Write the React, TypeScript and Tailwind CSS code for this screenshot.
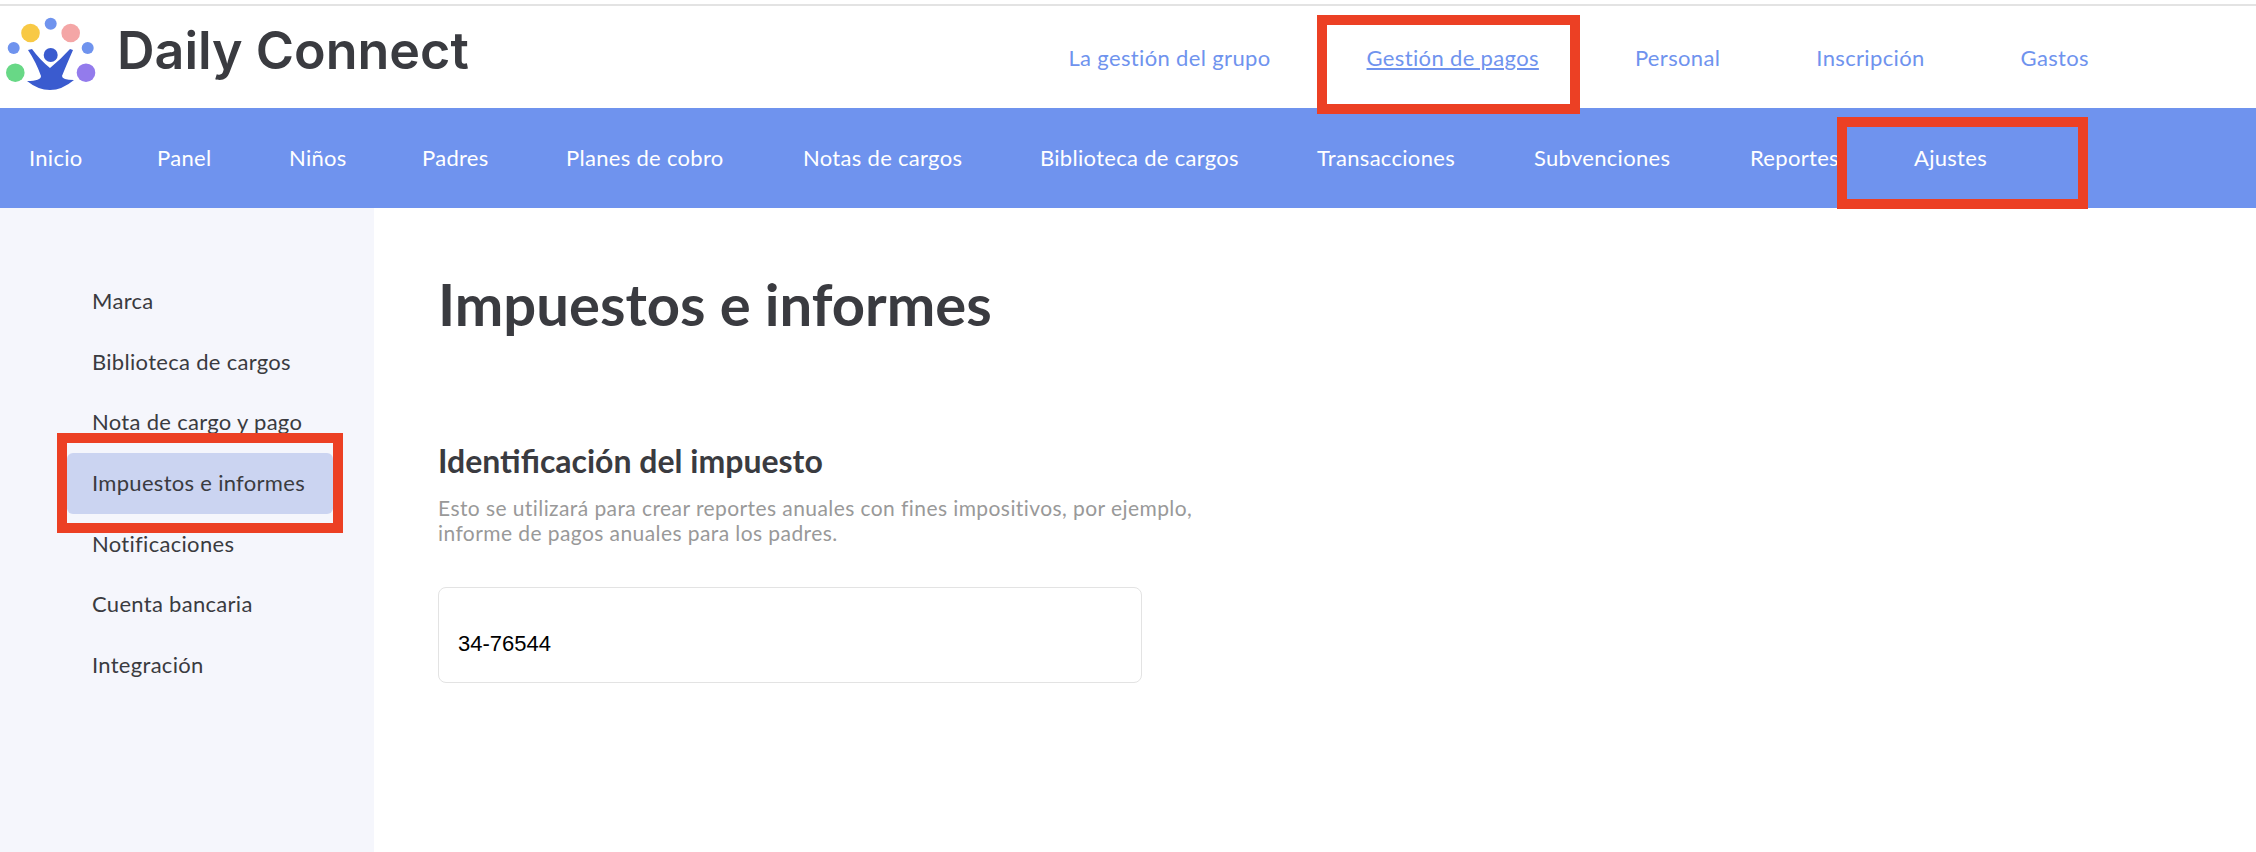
import React from 'react';

const topLinks = ['La gestión del grupo', 'Gestión de pagos', 'Personal', 'Inscripción', 'Gastos'];
const mainLinks = ['Inicio', 'Panel', 'Niños', 'Padres', 'Planes de cobro', 'Notas de cargos', 'Biblioteca de cargos', 'Transacciones', 'Subvenciones', 'Reportes', 'Ajustes'];
const sideLinks = ['Marca', 'Biblioteca de cargos', 'Nota de cargo y pago', 'Impuestos e informes', 'Notificaciones', 'Cuenta bancaria', 'Integración'];

function Logo() {
  return (
    <svg width="100" height="96" viewBox="0 0 100 96" className="mb-[6px] shrink-0">
      <circle cx="50.7" cy="23.7" r="6" fill="#6f93ee" />
      <circle cx="30.5" cy="33" r="9.3" fill="#f8c945" />
      <circle cx="70.7" cy="33" r="9.3" fill="#f4a6a6" />
      <circle cx="13.7" cy="48" r="6" fill="#6f93ee" />
      <circle cx="87.7" cy="48" r="6" fill="#6f93ee" />
      <circle cx="15.3" cy="72.7" r="9.3" fill="#68d886" />
      <circle cx="86" cy="72.7" r="9.3" fill="#937bec" />
      <circle cx="50.7" cy="55" r="7" fill="#3a5bcf" />
      <path
        d="M28 50 L32 49 Q40 60 50 68 Q60 60 70 49 L73 50 Q66 66 62 76 Q62 80 74 80 Q62 90 50 90 Q38 90 27 81 Q41 81 41 76 Q36 62 28 50 Z"
        fill="#3a5bcf"
      />
    </svg>
  );
}

export default function App() {
  return (
    <div className="relative min-h-[852px] overflow-hidden bg-white font-['Lato',sans-serif]">
      <div className="mt-1 h-0.5 bg-[#e3e3e3]" />

      {/* Top header */}
      <header className="flex h-[102px] items-center justify-between pr-[167px]">
        <div className="flex items-center pb-[12px]">
          <Logo />
          <span className="ml-[17px] text-[52px] font-semibold leading-none text-[#3a3b40] font-['Inter',sans-serif]">Daily Connect</span>
        </div>
        <nav className="flex gap-[96px] pt-px">
          {topLinks.map((link) => (
            <a key={link} className={`text-[22px] tracking-[0.35px] text-[#6f93ee] ${link === 'Gestión de pagos' ? 'underline' : ''}`}>
              {link}
            </a>
          ))}
        </nav>
      </header>

      {/* Main nav */}
      <nav className="grid h-[100px] grid-cols-[128px_132px_133px_144px_237px_237px_277px_217px_216px_164px_auto] items-center bg-[#6f93ee] pb-[2px] pl-[29px]">
        {mainLinks.map((link) => (
          <a key={link} className="text-[22px] tracking-[0.3px] text-white">
            {link}
          </a>
        ))}
      </nav>

      <div className="flex min-h-[644px]">
        {/* Sidebar */}
        <aside className="w-[374px] shrink-0 bg-[#f5f6fc] pl-[67px] pr-[41px] pt-[63px]">
          <ul className="flex flex-col">
            {sideLinks.map((link) => (
              <li
                key={link}
                className={`flex h-[60.7px] items-center rounded-md pb-[2px] pl-[25px] text-[22px] tracking-[0.3px] text-[#3a3b40] ${link === 'Impuestos e informes' ? 'bg-[#cbd4f1]' : ''}`}
              >
                {link}
              </li>
            ))}
          </ul>
        </aside>

        {/* Content */}
        <main className="pl-[64px] pt-[62px]">
          <h1 className="text-[58px] font-bold leading-[68px] text-[#3a3b40]">Impuestos e informes</h1>
          <h2 className="mt-[105px] text-[32px] font-bold leading-9 text-[#3a3b40]">Identificación del impuesto</h2>
          <p className="mt-[16px] w-[770px] text-[21px] leading-[25px] tracking-[0.42px] text-[#999999]">
            Esto se utilizará para crear reportes anuales con fines impositivos, por ejemplo, informe de pagos anuales para los padres.
          </p>
          <div className="mt-[42px] flex h-[96px] w-[704px] items-end rounded-lg border border-[#e3e3e3] pb-[26px] pl-[19px] font-['Liberation_Sans',sans-serif] text-[22px] leading-6 text-black">
            34-76544
          </div>
        </main>
      </div>

      {/* Red annotation boxes */}
      <div className="absolute left-[1317px] top-[15px] h-[99px] w-[263px] border-[10px] border-[#ec4024]" />
      <div className="absolute left-[1837px] top-[117px] h-[92px] w-[251px] border-[10px] border-[#ec4024]" />
      <div className="absolute left-[57px] top-[433px] h-[100px] w-[286px] border-[10px] border-[#ec4024]" />
    </div>
  );
}
